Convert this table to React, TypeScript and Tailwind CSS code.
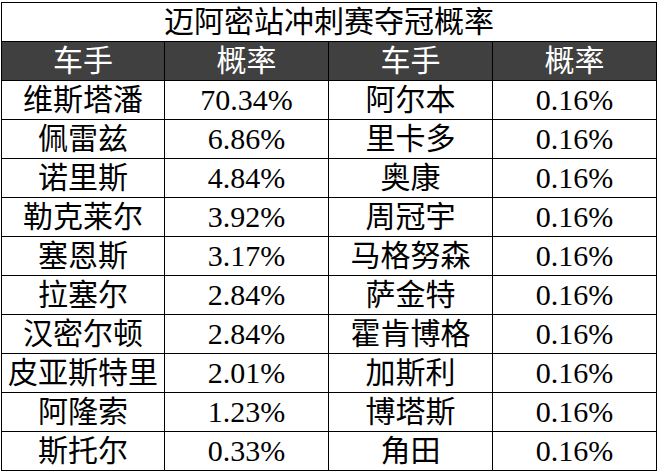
const rows = [
  ["维斯塔潘", "70.34%", "阿尔本", "0.16%"],
  ["佩雷兹", "6.86%", "里卡多", "0.16%"],
  ["诺里斯", "4.84%", "奥康", "0.16%"],
  ["勒克莱尔", "3.92%", "周冠宇", "0.16%"],
  ["塞恩斯", "3.17%", "马格努森", "0.16%"],
  ["拉塞尔", "2.84%", "萨金特", "0.16%"],
  ["汉密尔顿", "2.84%", "霍肯博格", "0.16%"],
  ["皮亚斯特里", "2.01%", "加斯利", "0.16%"],
  ["阿隆索", "1.23%", "博塔斯", "0.16%"],
  ["斯托尔", "0.33%", "角田", "0.16%"],
];

const cell = "h-[39px] border-r border-b border-black flex items-center justify-center";

const App = () => {
  return (
    <div className="w-[660px] h-[475px] bg-white pt-[2px] pl-[1px] font-['Liberation_Serif','Noto_Sans_CJK_SC',serif] text-[30px] leading-none text-black overflow-hidden">
      <div className="w-[656px] border-t border-l border-black">
        <div className="h-[39px] border-r border-b border-black flex items-center justify-center">
          迈阿密站冲刺赛夺冠概率
        </div>
        <div className="grid grid-cols-[163px_164px_164px_164px] bg-[#404040] text-white">
          <div className={cell}>车手</div>
          <div className={cell}>概率</div>
          <div className={cell}>车手</div>
          <div className={cell}>概率</div>
        </div>
        {rows.map((r, i) => (
          <div key={i} className="grid grid-cols-[163px_164px_164px_164px]">
            {r.map((t, j) => (
              <div key={j} className={cell}>
                {t}
              </div>
            ))}
          </div>
        ))}
      </div>
    </div>
  );
};

export default App;
